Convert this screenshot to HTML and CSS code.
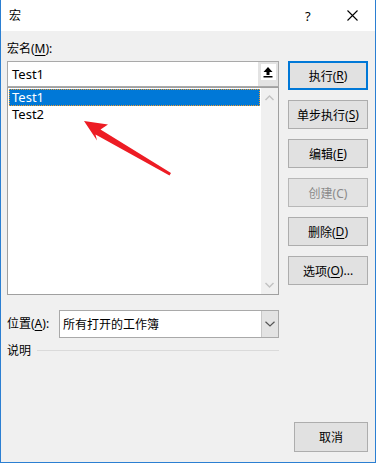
FILE: index.html
```html
<!DOCTYPE html>
<html>
<head>
<meta charset="utf-8">
<link rel="stylesheet" href="styles.css">
</head>
<body>
<div class="window">
  <div class="titlebar">
    <span class="title">宏</span>
    <span class="help">?</span>
    <span class="close">
      <svg width="11" height="11" viewBox="0 0 11 11"><path d="M0.5 0.5 L10.5 10.5 M10.5 0.5 L0.5 10.5" stroke="#000" stroke-width="1.1" fill="none"/></svg>
    </span>
  </div>
  <div class="content">
    <div class="top">
      <div class="left">
        <div class="label">宏名(<u>M</u>):</div>
        <div class="namebox">
          <span class="nametext">Test1</span>
          <div class="upbtn">
            <div class="upinner">
              <svg width="12" height="12" viewBox="0 0 12 12"><path d="M6 1 L10.5 6 L7.5 6 L7.5 9 L4.5 9 L4.5 6 L1.5 6 Z" fill="#000"/><rect x="1.5" y="10" width="9" height="1.5" fill="#000"/></svg>
            </div>
          </div>
        </div>
        <div class="list">
          <div class="items">
            <div class="item selected">Test1</div>
            <div class="item">Test2</div>
          </div>
          <div class="scrollbar">
            <svg width="9" height="6" viewBox="0 0 9 6"><path d="M0.5 5 L4.5 1 L8.5 5" stroke="#c2c2c2" stroke-width="1.4" fill="none"/></svg>
            <svg width="9" height="6" viewBox="0 0 9 6"><path d="M0.5 1 L4.5 5 L8.5 1" stroke="#c2c2c2" stroke-width="1.4" fill="none"/></svg>
          </div>
        </div>
      </div>
      <div class="buttons">
        <div class="btn default">执行(<u>R</u>)</div>
        <div class="btn">单步执行(<u>S</u>)</div>
        <div class="btn">编辑(<u>E</u>)</div>
        <div class="btn disabled">创建(C)</div>
        <div class="btn">删除(<u>D</u>)</div>
        <div class="btn">选项(<u>O</u>)...</div>
      </div>
    </div>
    <div class="location">
      <span class="loclabel">位置(<u>A</u>):</span>
      <div class="combo">
        <span class="combotext">所有打开的工作簿</span>
        <div class="combobtn">
          <svg width="10" height="6" viewBox="0 0 10 6"><path d="M0.5 0.8 L5 5 L9.5 0.8" stroke="#555" stroke-width="1.2" fill="none"/></svg>
        </div>
      </div>
    </div>
    <div class="desc">
      <span class="desctext">说明</span>
      <div class="rule"></div>
    </div>
    <div class="footer">
      <div class="btn cancel">取消</div>
    </div>
  </div>
  <svg class="arrow" width="376" height="463" viewBox="0 0 376 463">
    <polygon points="84,121 108,124.5 100.5,129.5 171,173 169.5,175.5 95.5,134.5 97,140.5" fill="#ed1c24"/>
  </svg>
</div>
</body>
</html>
```

FILE: styles.css
```css
html, body {
  margin: 0;
  padding: 0;
  background: #f0f0f0;
}

body {
  font-family: "Noto Sans", "Noto Sans CJK SC", sans-serif;
  font-size: 12px;
  color: #000;
}

.window {
  position: relative;
  width: 376px;
  height: 463px;
  box-sizing: border-box;
  border-left: 1px solid #2b7fd2;
  border-right: 1px solid #2b7fd2;
  border-bottom: 1px solid #2b7fd2;
  background: #f0f0f0;
  display: flex;
  flex-direction: column;
}

.titlebar {
  height: 31px;
  background: #fff;
  display: flex;
  align-items: center;
  flex-shrink: 0;
}

.title {
  margin-left: 8px;
  font-size: 12px;
  flex: 1;
  line-height: 16px;
}

.help {
  font-family: "Noto Sans", sans-serif;
  font-size: 13px;
  width: 12px;
  margin-right: 30px;
  line-height: 16px;
}

.close {
  display: flex;
  margin-right: 17px;
}

.content {
  flex: 1;
  padding: 0 7px 0 6px;
  display: flex;
  flex-direction: column;
}

.top {
  display: flex;
  gap: 9px;
}

.left {
  width: 272px;
  display: flex;
  flex-direction: column;
}

.label {
  margin-top: 10px;
  line-height: 16px;
  height: 16px;
  margin-bottom: 4px;
}

u {
  text-decoration: underline;
  text-underline-offset: 2px;
}

.namebox {
  height: 26px;
  box-sizing: border-box;
  border: 1px solid #a9a9a9;
  background: #fff;
  display: flex;
  align-items: center;
}

.nametext {
  flex: 1;
  padding-left: 4px;
  font-size: 13px;
}

.upbtn {
  width: 20px;
  height: 24px;
  background: #e3e3e3;
  display: flex;
  align-items: center;
  justify-content: center;
}

.upinner {
  width: 15px;
  height: 16px;
  background: #fff;
  display: flex;
  align-items: center;
  justify-content: center;
  margin-top: -4px;
}

.list {
  height: 208px;
  box-sizing: border-box;
  border: 1px solid #a0a0a0;
  background: #fff;
  display: flex;
}

.items {
  flex: 1;
  padding: 1px 1px 0 1px;
}

.item {
  height: 17px;
  line-height: 17px;
  padding-left: 3px;
  font-size: 13px;
  box-sizing: border-box;
}

.item.selected {
  background: #0078d7;
  color: #fff;
  outline: 1px dotted #f09a2c;
  outline-offset: -1px;
}

.scrollbar {
  width: 17px;
  background: #f0f0f0;
  display: flex;
  flex-direction: column;
  justify-content: space-between;
  align-items: center;
  padding: 7px 0 6px 0;
}

.buttons {
  width: 80px;
  display: flex;
  flex-direction: column;
  gap: 10px;
  padding-top: 30px;
}

.btn {
  height: 29px;
  box-sizing: border-box;
  border: 1px solid #adadad;
  background: #e1e1e1;
  display: flex;
  align-items: center;
  justify-content: center;
  font-size: 12px;
}

.btn.default {
  border: 2px solid #0078d7;
}

.btn.disabled {
  color: #8a8a8a;
  background: #e3e3e3;
  border-color: #b8b8b8;
}

.location {
  margin-top: 15px;
  display: flex;
  align-items: center;
  width: 272px;
}

.loclabel {
  width: 52px;
  line-height: 16px;
}

.combo {
  flex: 1;
  height: 28px;
  box-sizing: border-box;
  border: 1px solid #a9a9a9;
  background: #fff;
  display: flex;
  align-items: center;
}

.combotext {
  flex: 1;
  padding-left: 3px;
  font-size: 12px;
}

.combobtn {
  width: 16px;
  height: 26px;
  background: #e3e3e3;
  border-left: 1px solid #c8c8c8;
  display: flex;
  align-items: center;
  justify-content: center;
}

.desc {
  margin-top: 5px;
  width: 272px;
  display: flex;
  align-items: center;
  gap: 6px;
}

.desctext {
  line-height: 16px;
}

.rule {
  flex: 1;
  height: 1px;
  background: #dadada;
  margin-top: -2px;
}

.footer {
  margin-top: auto;
  margin-bottom: 10px;
  display: flex;
  justify-content: flex-end;
}

.btn.cancel {
  width: 74px;
  height: 30px;
}

.arrow {
  position: absolute;
  left: -1px;
  top: 0;
  pointer-events: none;
}
```
